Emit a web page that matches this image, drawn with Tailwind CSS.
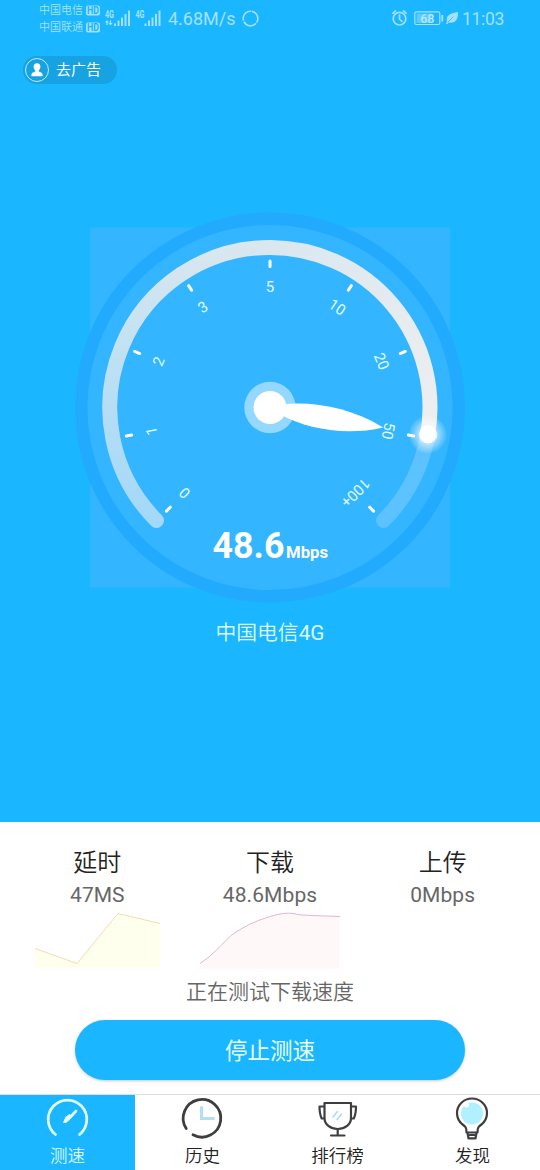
<!DOCTYPE html>
<html lang="zh-CN">
<head>
<meta charset="utf-8">
<title>测速</title>
<script src="https://cdn.jsdelivr.net/npm/@tailwindcss/browser@4"></script>
</head>
<body class="w-[540px] h-[1170px] overflow-hidden bg-white font-['Roboto','Noto_Sans_CJK_SC',sans-serif]">
<div class="flex flex-col h-[1170px]">
  <section class="h-[822px] shrink-0 bg-[#1ab6ff] flex flex-col">
    <header class="h-[38px] flex items-start text-[#a3e2ff]">
      <div class="ml-[39px] pt-[2px] flex flex-col text-[11px] leading-[17px]">
        <div class="flex items-center gap-[3px] whitespace-nowrap"><span class="w-[44px] font-[350]">中国电信</span>
          <svg class="w-[14px] h-[11px]" viewBox="0 0 14 11"><rect y=".5" width="14" height="10" rx="2" fill="#a3e2ff"/><text x="1" y="9.200" font-size="10.500" font-weight="700" fill="#1ab6ff" textLength="12" lengthAdjust="spacingAndGlyphs">HD</text></svg></div>
        <div class="flex items-center gap-[3px] whitespace-nowrap"><span class="w-[44px] font-[350]">中国联通</span>
          <svg class="w-[14px] h-[11px]" viewBox="0 0 14 11"><rect y=".5" width="14" height="10" rx="2" fill="#a3e2ff"/><text x="1" y="9.200" font-size="10.500" font-weight="700" fill="#1ab6ff" textLength="12" lengthAdjust="spacingAndGlyphs">HD</text></svg></div>
      </div>
      <svg class="ml-[4px] w-[60px] h-[38px]" viewBox="104 0 60 38" fill="#a3e2ff">
        <text x="105" y="17.500" font-size="10" font-weight="700" textLength="9" lengthAdjust="spacingAndGlyphs">4G</text>
        <path d="M107 20l2 2.500h-1.300V25h-1.300v-2.500H105zM110.500 25.500l-2-2.500h1.300v-2.500h1.300V23h1.500z"/>
        <path d="M114 23.500h2V26h-2zM117.500 20.500h2V26h-2zM121 17.500h2V26h-2zM124.500 14h2V26h-2zM128 10.500h2V26h-2z"/>
        <text x="135.500" y="17.500" font-size="10" font-weight="700" textLength="9" lengthAdjust="spacingAndGlyphs">4G</text>
        <path d="M144.500 23.500h2V26h-2zM148 20.500h2V26h-2zM151.500 17.500h2V26h-2zM155 14h2V26h-2zM158.500 10.500h2V26h-2z"/>
      </svg>
      <span class="ml-[4px] w-[68px] text-[18px] leading-[38px] whitespace-nowrap">4.68M/s</span>
      <svg class="ml-[6px] w-[18px] h-[38px]" viewBox="242 0 18 38" fill="none" stroke="#a3e2ff" stroke-width="1.600"><circle cx="250.500" cy="18.500" r="7.300" stroke-dasharray="14.300 1"  transform="rotate(-80 250.500 18.500)"/></svg>
      <svg class="ml-[130px] w-[70px] h-[38px]" viewBox="390 0 70 38" fill="none" stroke="#a3e2ff" stroke-width="1.700" stroke-linecap="round">
        <circle cx="399.500" cy="18.700" r="6.300"/><path d="M399.500 15v4l2.500 2.500M392.800 13.300l2.700-2.300M406.200 13.300l-2.700-2.300"/>
        <rect x="414.800" y="11.800" width="25" height="12.700" rx="1.500" stroke-width="1.200"/>
        <rect x="416.500" y="13.500" width="15" height="9.500" fill="#5ccaff" stroke="none"/>
        <path d="M442.300 15v6.500" stroke-width="1.800" stroke-linecap="butt"/>
        <text x="427.300" y="22.500" font-size="12.500" font-weight="500" text-anchor="middle" fill="#b8e9ff" stroke="none">68</text>
        <path d="M458 12c-8 1-12.500 4-11 9.500l-1 2.300 1.300.500 1.300-1.700C455.500 24 458.500 19 458 12z" fill="#a3e2ff" stroke="none"/>
        <path d="M448 22l5-5" stroke="#1ab6ff" stroke-width=".7"/>
      </svg>
      <span class="ml-[2px] text-[17.500px] tracking-[-0.3px] leading-[38px] whitespace-nowrap">11:03</span>
    </header>

    <button class="mt-[18px] ml-[23px] w-[94px] h-[28px] rounded-full bg-[#17a2e2] flex items-center text-white">
      <svg class="ml-[2px] w-[24px] h-[24px]" viewBox="0 0 24 24"><circle cx="12" cy="12" r="11.500" fill="none" stroke="#c4ebff"/><path fill="#fff" d="M12 5.200c-2.300 0-3.600 1.600-3.400 3.700.1 1.500.8 2.700 1.700 3.500v1.200c-2 .8-4 1.300-4 3.600 0 .700.300 1 1 1h9.400c.700 0 1-.300 1-1 0-2.300-2-2.800-4-3.600v-1.200c.9-.800 1.600-2 1.700-3.500.2-2.100-1.100-3.700-3.400-3.700z"/></svg>
      <span class="ml-[7px] text-[15px] leading-[28px] whitespace-nowrap">去广告</span>
    </button>

    <svg class="mt-[123px] ml-[70px] w-[400px] h-[400px] shrink-0" viewBox="70 207 400 400">
      <defs>
        <linearGradient id="arcLeft" gradientUnits="userSpaceOnUse" x1="0" y1="528" x2="0" y2="247"><stop offset="0" stop-color="#a2d8f8"/><stop offset=".45" stop-color="#b6def5"/><stop offset=".82" stop-color="#cde4f1"/><stop offset="1" stop-color="#dae7ef"/></linearGradient>
        <linearGradient id="arcRight" gradientUnits="userSpaceOnUse" x1="270" y1="247" x2="430" y2="407"><stop offset="0" stop-color="#dae7ef"/><stop offset="1" stop-color="#eceef0"/></linearGradient>
        <radialGradient id="glow"><stop offset=".4" stop-color="#fff" stop-opacity=".65"/><stop offset="1" stop-color="#fff" stop-opacity=".04"/></radialGradient>
      </defs>
      <rect x="90" y="227.500" width="360" height="360" fill="#33b5ff"/>
      <circle cx="270" cy="407.500" r="188.800" fill="#33b5ff" stroke="#22aaff" stroke-width="12.400"/>
      <path d="M427.500 435.500A160 160 0 0 1 383.500 520.500" fill="none" stroke="#5cc3ff" stroke-width="15" stroke-linecap="round"/>
      <path d="M270 247.500A160 160 0 0 0 156.500 520.500" fill="none" stroke="url(#arcLeft)" stroke-width="15" stroke-linecap="round"/>
      <path d="M269.500 247.500A160 160 0 0 1 427.600 435" fill="none" stroke="url(#arcRight)" stroke-width="15"/>
      <g stroke="#fff" stroke-width="3" stroke-linecap="round">
        <path d="M270 261v5.500" transform="rotate(-135 270 407.500)"/>
        <path d="M270 261v5.500" transform="rotate(-101.250 270 407.500)"/>
        <path d="M270 261v5.500" transform="rotate(-67.500 270 407.500)"/>
        <path d="M270 261v5.500" transform="rotate(-33.750 270 407.500)"/>
        <path d="M270 261v5.500"/>
        <path d="M270 261v5.500" transform="rotate(33.750 270 407.500)"/>
        <path d="M270 261v5.500" transform="rotate(67.500 270 407.500)"/>
        <path d="M270 261v5.500" transform="rotate(101.250 270 407.500)"/>
        <path d="M270 261v5.500" transform="rotate(135 270 407.500)"/>
      </g>
      <circle cx="270" cy="407.500" r="25.700" fill="#94d7ff"/>
      <path d="M281 -5C310 -14 350 -14 385 0C350 15 310 15 281 5Z" transform="translate(270 407.500) rotate(10) translate(-270 0)" fill="#fff"/>
      <circle cx="270" cy="407.500" r="16.500" fill="#fff"/>
      <g fill="#e2ffff" font-size="15" text-anchor="middle">
        <text x="270" y="292" transform="rotate(-135 270 407.500)">0</text>
        <text x="270" y="292" transform="rotate(-101.250 270 407.500)">1</text>
        <text x="270" y="292" transform="rotate(-67.500 270 407.500)">2</text>
        <text x="270" y="292" transform="rotate(-33.750 270 407.500)">3</text>
        <text x="270" y="292">5</text>
        <text x="270" y="292" transform="rotate(33.750 270 407.500)">10</text>
        <text x="270" y="292" transform="rotate(67.500 270 407.500)">20</text>
        <text x="270" y="292" transform="rotate(101.250 270 407.500)">50</text>
        <text x="270" y="292" transform="rotate(135 270 407.500)">100+</text>
      </g>
      <circle cx="427.800" cy="434.500" r="19" fill="url(#glow)"/>
      <circle cx="428" cy="434.500" r="9" fill="#fff"/>
      <g fill="#fff" font-weight="700"><text x="212.500" y="558" font-size="36" textLength="72" lengthAdjust="spacingAndGlyphs">48.6</text><text x="286" y="558" font-size="16.500" textLength="42" lengthAdjust="spacingAndGlyphs">Mbps</text></g>
    </svg>
    <p class="mt-[11px] text-center text-[20.800px] leading-[30px] text-[#dcfaff]"><span class="font-[350]">中国电信</span>4G</p>
  </section>

  <main class="h-[272px] shrink-0 flex flex-col items-center">
    <div class="w-full px-[11px] grid grid-cols-3 pt-[23px] h-[147px]">
      <div class="flex flex-col items-center">
        <h2 class="text-[24px] leading-[37px] font-[350] text-[#222]">延时</h2>
        <p class="-mt-[2px] text-[21px] leading-[30px] text-[#666]">47MS</p>
        <svg class="w-[126px] h-[58px] mt-px ml-px" viewBox="35 911 126 58"><path d="M35 948.500L77 963.500L118 913.500L160 923.500V968.500H35z" fill="#ffffee"/><path d="M35 948.500L77 963.500L118 913.500L160 923.500" fill="none" stroke="#f2dcb4"/></svg>
      </div>
      <div class="flex flex-col items-center">
        <h2 class="text-[24px] leading-[37px] font-[350] text-[#222]">下载</h2>
        <p class="-mt-[2px] text-[21px] leading-[30px] text-[#666] tracking-[0.1px]">48.6Mbps</p>
        <svg class="w-[140px] h-[58px] mt-px" viewBox="200 911 140 58"><path d="M200 963.500L209 957Q220 947 231 935.500Q248 923 270 916.500Q285 912 293 913.500Q300 915.500 312 915.500L340 916.500V968.500H200z" fill="#fff8f8"/><path d="M200 963.500L209 957Q220 947 231 935.500Q248 923 270 916.500Q285 912 293 913.500Q300 915.500 312 915.500L340 916.500" fill="none" stroke="#e3b5d4"/></svg>
      </div>
      <div class="flex flex-col items-center">
        <h2 class="text-[24px] leading-[37px] font-[350] text-[#222]">上传</h2>
        <p class="-mt-[2px] text-[21px] leading-[30px] text-[#666] tracking-[0.1px]">0Mbps</p>
      </div>
    </div>
    <p class="mt-[8px] text-[21px] leading-[30px] font-[350] text-[#666]">正在测试下载速度</p>
    <button class="mt-[13px] w-[390px] h-[60px] shrink-0 rounded-full bg-[#1ab6ff] text-[#e8ffff] text-[22.500px] pt-[3px] shadow-[0_1px_3px_rgba(0,0,0,0.22)]">停止测速</button>
  </main>

  <nav class="h-[76px] shrink-0 border-t border-[#dedede] grid grid-cols-4 text-[17.500px] font-[350] text-[#222]">
    <a class="bg-[#1ab6ff] text-[#d8f7ff] flex flex-col items-center">
      <svg class="w-[51px] h-[48px]" viewBox="42 1095 51 48" fill="none" stroke="#e4ffff" stroke-width="2.700" stroke-linecap="round"><path d="M55.500 1134.500A19.300 19.300 0 1 1 79.500 1134.500"/><path d="M70 1117.500L76 1111"/><path d="M63.800 1122.300l2.200-5 3.600-2.600 1.400 1.300-2 3.800-3.500 2.600z" fill="#e4ffff" stroke-width="1.200" stroke-linejoin="round"/></svg>
      <span class="leading-[27px]">测速</span>
    </a>
    <a class="flex flex-col items-center">
      <svg class="w-[51px] h-[48px]" viewBox="177 1095 51 48" fill="none" stroke="#3e3e41" stroke-width="2.800" stroke-linecap="round"><path d="M186.200 1128.500A18.800 18.800 0 1 1 193 1134.800"/><path d="M201.500 1107.500v11h12" stroke="#b2dff2" stroke-width="3.200"/></svg>
      <span class="leading-[27px]">历史</span>
    </a>
    <a class="flex flex-col items-center">
      <svg class="w-[51px] h-[48px]" viewBox="312 1095 51 48" fill="none" stroke="#3e3e41" stroke-width="2.200" stroke-linecap="round" stroke-linejoin="round"><path d="M324.500 1103h26.500v15c0 6.500-6 11-13.300 11s-13.200-4.500-13.200-11zM337.700 1129v6M331 1135.500h13.500M324 1106.500h-4.500c0 4.500.5 8.500 2.200 12h3M351.500 1106.500h4.500c0 4.500-.5 8.500-2.200 12h-3"/><path d="M333 1117l4.500-5.500M337 1119.500l4.500-5.500" stroke="#a6dcf5" stroke-width="1.500"/></svg>
      <span class="leading-[27px]">排行榜</span>
    </a>
    <a class="flex flex-col items-center">
      <svg class="w-[51px] h-[48px]" viewBox="447 1095 51 48" fill="none" stroke="#3e3e41" stroke-width="2.200" stroke-linejoin="round"><circle cx="472" cy="1113.500" r="11" fill="#b0f0ff" stroke="none"/><circle cx="466.500" cy="1105" r="2.500" fill="#fff" stroke="none"/><path d="M466.500 1132.500c0-5-1-6-4.500-8.500a15 14.600 0 1 1 20 0c-3.500 2.500-4.500 3.500-4.500 8.500z"/><path d="M467.500 1133l1 5.300h7l1-5.300M469 1135h6"/></svg>
      <span class="leading-[27px]">发现</span>
    </a>
  </nav>
</div>
</body>
</html>
